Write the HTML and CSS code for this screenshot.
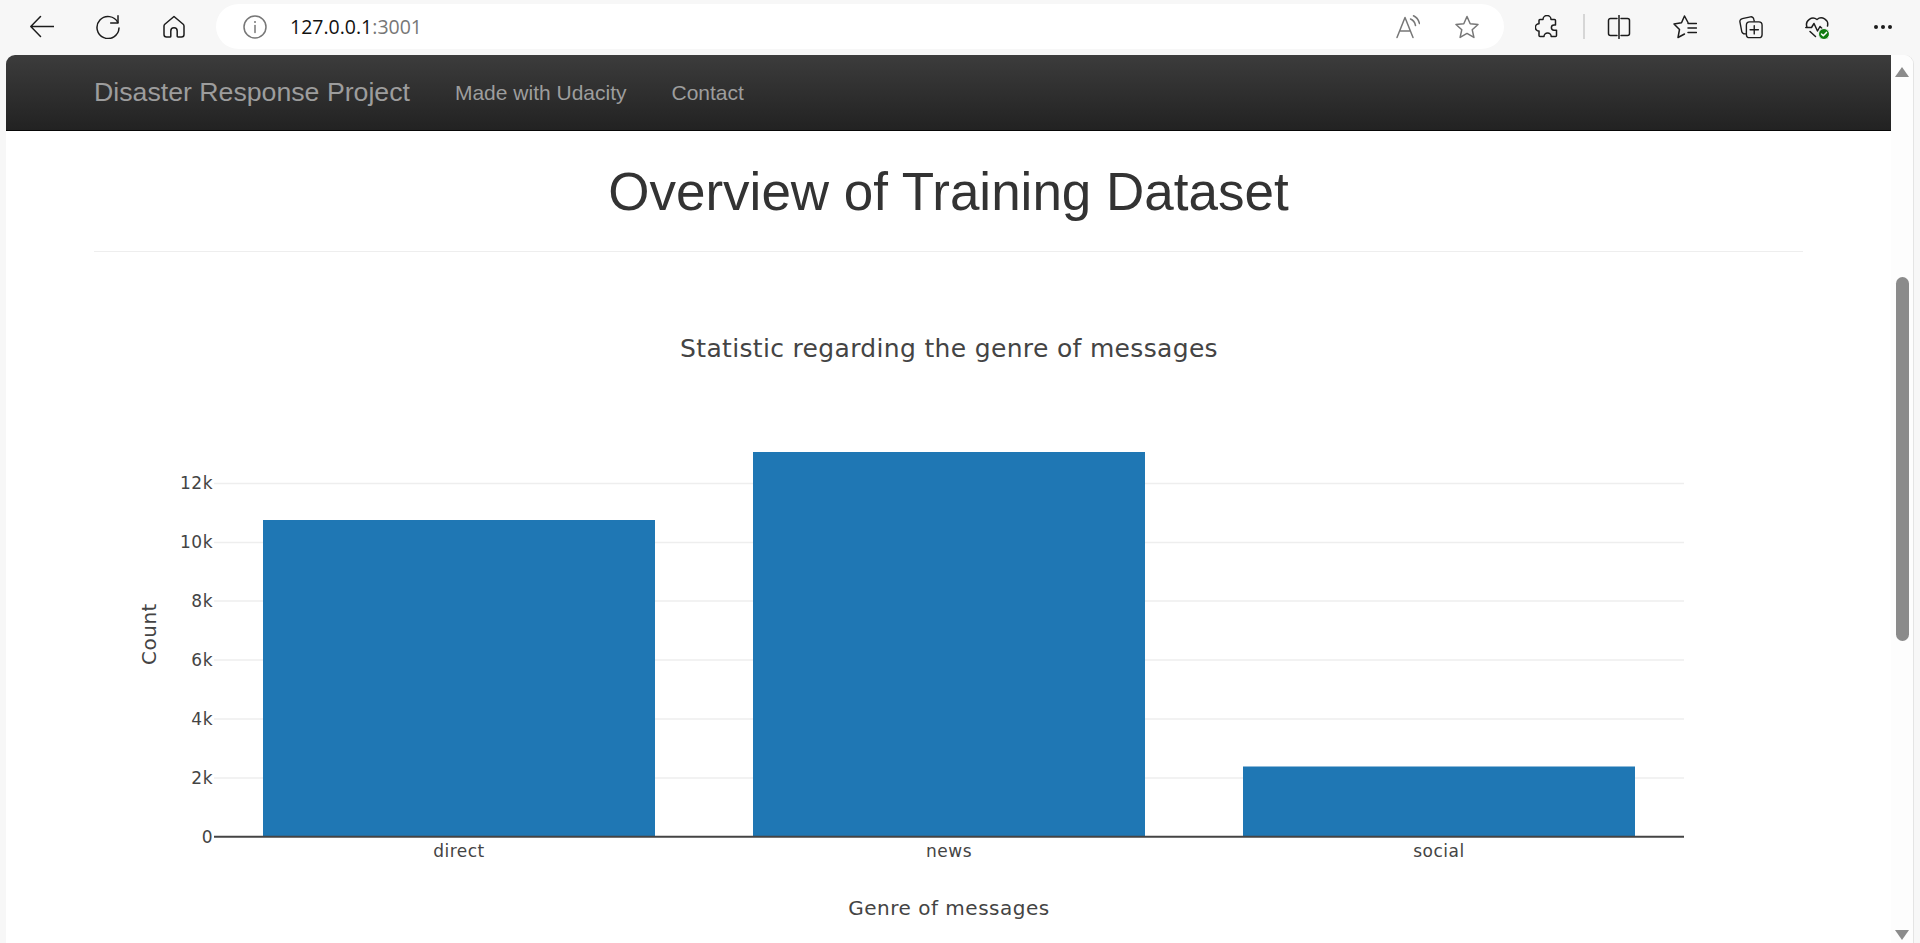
FILE: index.html
```html
<!DOCTYPE html>
<html lang="en">

<head>
    <title>Disaster Response Project</title>
    <meta charset="UTF-8">
    <meta name="viewport" content="width=device-width, initial-scale=1.0">
    <link rel="stylesheet" href="styles.css">
</head>

<body>
    <div class="toolbar">
        <svg class="icon nav-icon" viewBox="0 0 24 24"><path d="M24 11.500H1M10.500 1.500L.8 11.500l9.700 10"/></svg>
        <svg class="icon nav-icon" viewBox="0 0 24 24"><path d="M21.800 7.500A11 11 0 1 0 23 13"/><path d="M22 .8V8h-7.300"/></svg>
        <svg class="icon nav-icon" viewBox="0 0 24 24"><path d="M12 1.500L2.800 9.300A2.500 2.500 0 0 0 2 11v8.500A2.500 2.500 0 0 0 4.500 22H8a.8.8 0 0 0 .8-.8V16a3.200 3.200 0 0 1 6.400 0v5.200a.8.8 0 0 0 .8.8h3.500a2.500 2.500 0 0 0 2.500-2.500V11a2.500 2.500 0 0 0-.8-1.700z"/></svg>

        <div class="address-bar">
            <svg class="icon gray" viewBox="0 0 24 24"><circle cx="12" cy="12" r="11"/><path d="M12 10.500v7"/><circle class="dot" cx="12" cy="7" r="1"/></svg>
            <div class="url">127.0.0.1<span class="port">:3001</span></div>
            <svg class="icon gray read-aloud" viewBox="0 0 24 24"><path d="M1 22.500L9 2.500l8 20M4 16h10"/><path d="M14.500 4q4 1.500 5 6.500M17.500 .8q4.500 2 6 7.700"/></svg>
            <svg class="icon gray star" viewBox="0 0 24 24"><path d="M12 1.500l3.200 7.200 7.800.8-5.800 5.200 1.700 7.700-6.900-4-6.900 4 1.700-7.700L1 9.500l7.800-.8z"/></svg>
        </div>

        <svg class="icon puzzle" viewBox="0 0 24 24"><path d="M8 4.500a4 4 0 0 1 8 0h3.500a1 1 0 0 1 1 1V10H19a2.600 2.600 0 0 0 0 5.200h2.500v5.300a1 1 0 0 1-1 1h-4.300a3.600 3.600 0 0 0-7.200 0H5a1 1 0 0 1-1-1V16a3.600 3.600 0 0 1 0-7.200V5.500a1 1 0 0 1 1-1z"/></svg>
        <div class="separator"></div>
        <svg class="icon split" viewBox="0 0 24 24"><path d="M10 3.500H3.500a2 2 0 0 0-2 2v13a2 2 0 0 0 2 2H10M14 3.500h6.500a2 2 0 0 1 2 2v13a2 2 0 0 1-2 2H14M12 .5v23"/></svg>
        <svg class="icon tool-icon" viewBox="0 0 24 24"><path d="M15 7.500L11.500 1 8.500 7.800 1 9l5.500 5.500L5 22.500l6.500-3.500"/><path d="M15 8.500h8.500M15 13h8.500M15 17.500h8.500"/></svg>
        <svg class="icon tool-icon" viewBox="0 0 26 24"><path d="M8 19.500H6.500A3.500 3.500 0 0 1 3 17L1 6.500A3 3 0 0 1 3.500 3L12.500 1A3 3 0 0 1 16 3.500l.5 2"/><rect x="8" y="6.500" width="17" height="17" rx="3.500"/><path d="M16.500 10.500v9M12 15h9"/></svg>
        <svg class="icon tool-icon" viewBox="0 0 24 24"><path d="M1.800 11.500A6.500 6.500 0 0 1 12 4.500a6.500 6.500 0 0 1 10.500 6.500"/><path d="M.8 12.500h5.700l2.500-4 3.500 7.500 2.500-4.500 2 2"/><path d="M5 16.500l5.500 5"/><circle class="ok-dot" cx="19" cy="19" r="5.500"/><path class="ok-check" d="M16.500 19l1.800 1.800 3.200-3.400"/></svg>
        <div class="more"><span></span><span></span><span></span></div>
    </div>

    <div class="window">
        <div class="page">
            <div class="navbar">
                <span class="brand">Disaster Response Project</span>
                <span class="nav-link">Made with Udacity</span>
                <span class="nav-link">Contact</span>
            </div>

            <div class="container">
                <div class="page-header">
                    <h1>Overview of Training Dataset</h1>
                </div>

                <svg class="chart" width="1709" height="691" viewBox="0 0 1709 691">
                    <text class="chart-title" x="855" y="105" text-anchor="middle">Statistic regarding the genre of messages</text>

                    <g class="grid">
                        <path d="M120 231.500H1590M120 290.500H1590M120 349H1590M120 408H1590M120 467H1590M120 526H1590"/>
                    </g>

                    <g class="bars">
                        <rect x="169" y="268" width="392" height="317"/>
                        <rect x="659" y="200" width="392" height="385"/>
                        <rect x="1149" y="514.500" width="392" height="70.500"/>
                    </g>

                    <path class="zero-line" d="M120 584.800H1590"/>

                    <g class="tick" text-anchor="end">
                        <text x="119" y="237">12k</text>
                        <text x="119" y="296">10k</text>
                        <text x="119" y="355">8k</text>
                        <text x="119" y="414">6k</text>
                        <text x="119" y="473">4k</text>
                        <text x="119" y="532">2k</text>
                        <text x="119" y="591">0</text>
                    </g>
                    <g class="tick" text-anchor="middle">
                        <text x="365" y="605">direct</text>
                        <text x="855" y="605">news</text>
                        <text x="1345" y="605">social</text>
                    </g>

                    <text class="axis-title" x="855" y="663" text-anchor="middle">Genre of messages</text>
                    <text class="axis-title" x="0" y="0" text-anchor="middle" transform="translate(62 382) rotate(-90)">Count</text>
                </svg>
            </div>
        </div>

        <div class="scrollbar">
            <div class="arrow-up"></div>
            <div class="thumb"></div>
            <div class="arrow-down"></div>
        </div>
    </div>
</body>

</html>
```

FILE: styles.css
```css
html,
body {
    margin: 0;
    height: 943px;
    overflow: hidden;
}

body {
    background-color: #f7f7f7;
    font-family: "Liberation Sans", Arial, sans-serif;
}

.toolbar {
    display: flex;
    align-items: center;
    height: 55px;
    padding-left: 30px;
    padding-bottom: 2px;
    box-sizing: border-box;
}

.icon {
    flex: none;
    width: 24px;
    height: 24px;
    fill: none;
    stroke: #1c1c1c;
    stroke-width: 1.5;
    stroke-linecap: round;
    stroke-linejoin: round;
}

.icon.gray {
    stroke: #777;
}

.icon .dot {
    fill: #777;
    stroke: none;
}

.nav-icon {
    margin-right: 42px;
}

.nav-icon:nth-child(3) {
    margin-right: 30px;
}

.address-bar {
    display: flex;
    align-items: center;
    flex: none;
    width: 1288px;
    height: 45px;
    padding-left: 27px;
    box-sizing: border-box;
    background-color: #fff;
    border-radius: 23px;
}

.url {
    flex: 1;
    margin-left: 23px;
    font-family: "Open Sans", sans-serif;
    font-size: 19.5px;
    color: #111;
}

.port {
    color: #777;
}

.read-aloud {
    margin-right: 35px;
}

.star {
    margin-right: 25px;
}

.puzzle {
    margin-left: 31px;
}

.separator {
    width: 2px;
    height: 25px;
    margin: 0 22px 0 24px;
    background-color: #d6d6d6;
}

.split {
    margin-right: 42px;
}

.tool-icon {
    margin-right: 42px;
}

.more {
    display: flex;
    gap: 3px;
    margin-left: 3px;
}

.more span {
    width: 4px;
    height: 4px;
    border-radius: 50%;
    background-color: #1c1c1c;
}

.ok-dot {
    fill: #107c10;
    stroke: #f7f7f7;
    stroke-width: 1;
}

.ok-check {
    stroke: #fff;
    stroke-width: 1.5;
}

.window {
    display: flex;
    width: 1907px;
    height: 888px;
    margin-left: 6px;
    overflow: hidden;
    background-color: #fff;
    border-radius: 9px 9px 0 0;
    box-shadow: 1px 0 0 #e4e4e4;
}

.page {
    flex: none;
    width: 1885px;
}

.navbar {
    display: flex;
    align-items: center;
    height: 76px;
    padding-left: 88px;
    box-sizing: border-box;
    background-image: linear-gradient(to bottom, #3c3c3c 0, #222 100%);
    border-bottom: 1px solid #080808;
}

.brand {
    font-size: 26.7px;
    color: #9d9d9d;
    margin-right: 45px;
}

.nav-link {
    font-size: 21px;
    color: #9d9d9d;
    margin-right: 45px;
}

.container {
    width: 1709px;
    margin-left: 88px;
}

.page-header {
    height: 121px;
    box-sizing: border-box;
    border-bottom: 1px solid #eee;
}

h1 {
    margin: 0;
    padding-top: 32px;
    font-size: 53px;
    font-weight: 400;
    line-height: 1.1;
    text-align: center;
    color: #333;
}

.chart {
    display: block;
    font-family: "DejaVu Sans", Verdana, sans-serif;
}

.chart-title {
    font-size: 25px;
    letter-spacing: 0.33px;
    fill: #444;
}

.axis-title {
    font-size: 20px;
    letter-spacing: 0.5px;
    fill: #444;
}

.tick {
    font-size: 17px;
    letter-spacing: 0.5px;
    fill: #444;
}

.grid path {
    fill: none;
    stroke: #eee;
    stroke-width: 1.5;
}

.bars rect {
    fill: #1f77b4;
}

.zero-line {
    stroke: #444;
    stroke-width: 2;
}

.scrollbar {
    display: flex;
    flex-direction: column;
    align-items: center;
    flex: none;
    width: 22px;
    padding-top: 12px;
    padding-bottom: 3px;
    box-sizing: border-box;
    background-color: #fdfdfd;
}

.arrow-up,
.arrow-down {
    width: 0;
    height: 0;
    border-left: 7.5px solid transparent;
    border-right: 7.5px solid transparent;
}

.arrow-up {
    border-bottom: 10px solid #8b8b8b;
}

.arrow-down {
    margin-top: auto;
    border-top: 10px solid #8b8b8b;
}

.thumb {
    width: 13px;
    height: 364px;
    margin-top: 200px;
    background-color: #8b8b8b;
    border-radius: 7px;
}
```
